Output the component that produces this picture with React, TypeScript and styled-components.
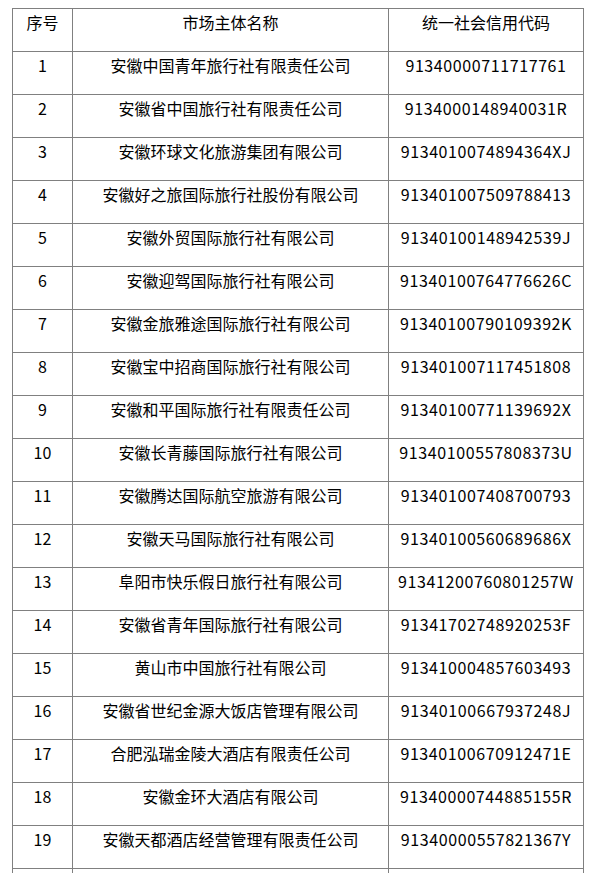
import styled, { createGlobalStyle } from "styled-components";

const GlobalStyle = createGlobalStyle`
  body {
    margin: 0;
    background: #fff;
  }
`;

const Page = styled.div`
  padding: 8px 6px 0 12px;
  font-family: "Noto Sans CJK SC", "Noto Sans", sans-serif;
  color: #000;
`;

const Table = styled.table`
  border-collapse: collapse;
  width: 571px;
  table-layout: fixed;
`;

const Cell = styled.td<{ $w?: number }>`
  border: 1px solid #808080;
  height: 43px;
  padding: 1px 4px 0;
  box-sizing: border-box;
  vertical-align: top;
  text-align: center;
  font-size: 16px;
  line-height: 24px;
  white-space: nowrap;
  width: ${(p) => (p.$w ? p.$w + "px" : "auto")};
`;

const Code = styled(Cell)`
  letter-spacing: 0.6px;
`;

const rows: [string, string][] = [
  ["安徽中国青年旅行社有限责任公司", "91340000711717761"],
  ["安徽省中国旅行社有限责任公司", "9134000148940031R"],
  ["安徽环球文化旅游集团有限公司", "9134010074894364XJ"],
  ["安徽好之旅国际旅行社股份有限公司", "913401007509788413"],
  ["安徽外贸国际旅行社有限公司", "91340100148942539J"],
  ["安徽迎驾国际旅行社有限公司", "91340100764776626C"],
  ["安徽金旅雅途国际旅行社有限公司", "91340100790109392K"],
  ["安徽宝中招商国际旅行社有限公司", "913401007117451808"],
  ["安徽和平国际旅行社有限责任公司", "91340100771139692X"],
  ["安徽长青藤国际旅行社有限公司", "91340100557808373U"],
  ["安徽腾达国际航空旅游有限公司", "913401007408700793"],
  ["安徽天马国际旅行社有限公司", "91340100560689686X"],
  ["阜阳市快乐假日旅行社有限公司", "91341200760801257W"],
  ["安徽省青年国际旅行社有限公司", "91341702748920253F"],
  ["黄山市中国旅行社有限公司", "913410004857603493"],
  ["安徽省世纪金源大饭店管理有限公司", "91340100667937248J"],
  ["合肥泓瑞金陵大酒店有限责任公司", "91340100670912471E"],
  ["安徽金环大酒店有限公司", "91340000744885155R"],
  ["安徽天都酒店经营管理有限责任公司", "91340000557821367Y"],
];

export default function App() {
  return (
    <Page>
      <GlobalStyle />
      <Table>
        <tbody>
          <tr>
            <Cell $w={60}>序号</Cell>
            <Cell $w={316}>市场主体名称</Cell>
            <Cell $w={195}>统一社会信用代码</Cell>
          </tr>
          {rows.map(([name, code], i) => (
            <tr key={code}>
              <Cell>{i + 1}</Cell>
              <Cell>{name}</Cell>
              <Code>{code}</Code>
            </tr>
          ))}
          <tr>
            <Cell />
            <Cell />
            <Cell />
          </tr>
        </tbody>
      </Table>
    </Page>
  );
}
